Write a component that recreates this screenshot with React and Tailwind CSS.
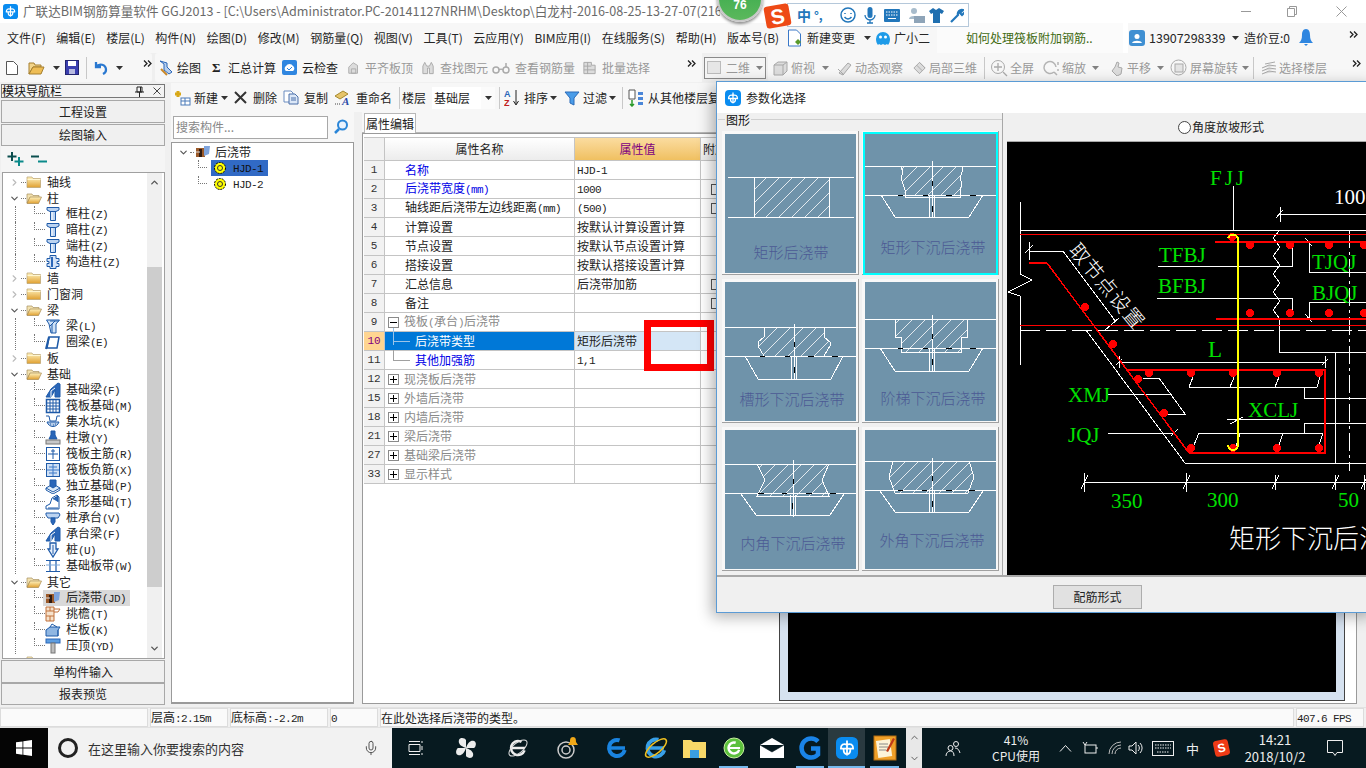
import React from "react";
import { Mic, ChevronUp, ChevronDown, ChevronRight } from "lucide-react";

const M = ({ children, className = "" }) => {
  const parts = String(children).split(/([\x00-\x7f]+)/).filter(Boolean);
  return (
    <span className={"whitespace-pre " + className}>
      {parts.map((p, i) =>
        /^[\x00-\x7f]+$/.test(p) ? (
          <span key={i} className="font-['Liberation_Mono'] text-[11px] tracking-[-0.6px]">{p}</span>
        ) : (
          <span key={i}>{p}</span>
        )
      )}
    </span>
  );
};

const Caret = ({ className = "" }) => (
  <svg width="7" height="4" viewBox="0 0 7 4" className={"shrink-0 " + className}><path d="M0 0h7L3.5 4z" fill="#333" /></svg>
);
const More = ({ className = "" }) => (
  <svg width="9" height="7" viewBox="0 0 9 7" className={"shrink-0 " + className}><path d="M1 .5l3 3-3 3M5 .5l3 3-3 3" fill="none" stroke="#222" strokeWidth="1.3" /></svg>
);
const Glodon = ({ s = 16, r = 3 }) => (
  <svg width={s} height={s} viewBox="0 0 16 16">
    <rect width="16" height="16" rx={r} fill="#0a8cf0" />
    <path d="M8 2.5v11M3 8.5h10M8 5.5c-2.5-1-4.5 0-4.5 3M8 5.5c2.5-1 4.5 0 4.5 3M5.5 8.5c0 2.5 1 4 2.5 4s2.5-1.500 2.500-4" fill="none" stroke="#fff" strokeWidth="1.300" />
  </svg>
);

/* ---------- tree icons ---------- */
const Folder = ({ open }) => (
  <svg width="16" height="14" viewBox="0 0 16 14" className="shrink-0">
    <defs>
      <linearGradient id="fg" x1="0" y1="0" x2="0" y2="1"><stop offset="0" stopColor="#fff3c0" /><stop offset="1" stopColor="#e0a030" /></linearGradient>
    </defs>
    {open ? (
      <>
        <path d="M1 3h5l1 1.500h6v2H4L1 12z" fill="#f3e2b0" stroke="#a89060" strokeWidth=".7" />
        <path d="M4 6h11.500l-3 6.500H1z" fill="url(#fg)" stroke="#a88a50" strokeWidth=".7" />
      </>
    ) : (
      <>
        <path d="M1 3.500V2h5l1 1.500h7.500v9H1z" fill="url(#fg)" stroke="#b8a070" strokeWidth=".7" />
        <path d="M1.500 4.500h13" stroke="#fff6d0" strokeWidth="1" />
      </>
    )}
  </svg>
);
const Ic = ({ children }) => (
  <svg width="16" height="16" viewBox="0 0 16 16" fill="none" stroke="#1e5aa8" strokeWidth="1" className="shrink-0">{children}</svg>
);
const treeIcon = {
  col: <Ic><path d="M2 1.500h12v2.500l-3 1.500H5L2 4zM5.500 5.500h5v9h-5z" fill="#bcd4f2" /><path d="M7 6v8" stroke="#fff" /></Ic>,
  gz: <Ic><path d="M5 1.500h6v3h3v3h-2v2h2v3h-3v2H5v-2H2v-3h2v-2H2v-3h3z" fill="#d6e4f7" /><path d="M7 3v10" stroke="#2a66b8" strokeWidth="2" /></Ic>,
  beam: <Ic><path d="M1.500 2h13L11 6v9H6L4 6z" fill="#cfe2f7" /><path d="M5 3l9 0M7 6v9M10 3L5 8" /></Ic>,
  ring: <Ic><path d="M4 3h10l-2 11H2z" fill="#fff" strokeWidth="1.500" /><path d="M1 15l3-12" strokeWidth="2" /></Ic>,
  fbeam: <Ic><path d="M1 15l5-8 7-6 2 1v13H10V8L6 15z" fill="#2a66b8" /><path d="M6 15V9l4-3" stroke="#fff" /></Ic>,
  grid: <Ic><rect x="1.500" y="1.500" width="13" height="13" fill="#fff" strokeWidth="1.500" /><path d="M5 1.500v13M8 1.500v13M11 1.500v13M1.500 5h13M1.500 8h13M1.500 11h13" /></Ic>,
  pit: <Ic><path d="M1 2h3l1 5h6l1-5h3" /><path d="M2 8c2 6 10 6 12 0z" fill="#b7cde8" /><path d="M5 10h1M8 11h1M10 10h1" /></Ic>,
  pier: <Ic><path d="M6 1h4v4l2 4H4l2-4z" fill="#2a66b8" /><rect x="1" y="10" width="14" height="4" fill="#c8c8c8" stroke="#777" /></Ic>,
  rbar: <Ic><rect x="1.500" y="1.500" width="13" height="13" fill="#fff" /><path d="M8 3v10M3 8h10M6 5h4" /></Ic>,
  nbar: <Ic><rect x="1.500" y="1.500" width="13" height="13" fill="#cfe0f5" /><path d="M8 2v12M2 8h12M4 5h8M4 11h8" stroke="#3a78c8" /></Ic>,
  ftg: <Ic><path d="M1 10l7-4 7 4-7 4z" fill="#dbe9f8" /><path d="M1 10v2l7 4 7-4v-2" /><path d="M5 2h6v6l-3 2-3-2z" fill="#2a66b8" /></Ic>,
  strip: <Ic><path d="M1 15v-3l4-2 2-6 5-3 2 2v12H1z" fill="#fff" /><path d="M8 5l5-3v6" fill="#2a66b8" /><path d="M3 14h10" /></Ic>,
  cap: <Ic><path d="M1 3h13l1 2-2 3H3L1 5z" fill="#bcd4f2" /><path d="M6 8h4v4l-2 3-2-3z" fill="#2a66b8" /></Ic>,
  pile: <Ic><path d="M5 1h6v6h2l-5 8-5-8h2z" fill="#e8f0fb" strokeWidth="1.300" /><path d="M8 3v9" /></Ic>,
  band: <Ic><path d="M1 2.500h14M1 13.500h14M5 2.500v11M11 2.500v11" strokeWidth="1.200" /><path d="M1 7h14" stroke="#7aa8dc" /></Ic>,
  jd: <Ic><path d="M1 4h9v9H1z" fill="#9b5a2a" stroke="none" /><path d="M4 5h3v8H4z" fill="#301a10" stroke="none" /><path d="M9 2l6 0-1 8-5 2z" fill="#7fa4dc" stroke="none" /><path d="M1 8h4" stroke="#ddd" /></Ic>,
  eave: <Ic><path d="M1 1h8v14H1z" fill="#f6e2cc" stroke="#c0703a" /><path d="M1 5h8M1 10h8M5 1v4M5 10v5M9 3h6l-2 3H9" stroke="#c0703a" /></Ic>,
  rail: <Ic><path d="M1 8l4-3h10l-2 3v6H1z" fill="#8fb6e2" /><path d="M5 5l2-3 5 3" /><path d="M13 8v6" /></Ic>,
  cope: <Ic><rect x="1" y="1" width="14" height="4" fill="#5d9de0" stroke="#2a66b8" /><rect x="6" y="5" width="4" height="10" fill="#bdbdbd" stroke="#777" /></Ic>,
};
const Gear = () => (
  <svg width="14" height="14" viewBox="0 0 14 14"><circle cx="7" cy="7" r="5.500" fill="#ffff00" stroke="#000" strokeWidth="1" strokeDasharray="2 1" /><circle cx="7" cy="7" r="2.500" fill="#ffff00" stroke="#333" /></svg>
);

const Tree0 = ({ open, text }) => (
  <div className="flex items-center h-4 shrink-0">
    <span className="w-[6px]" />
    {open ? <ChevronDown size={11} strokeWidth={2.5} color="#555" /> : <ChevronRight size={11} strokeWidth={2.5} color="#bbb" />}
    <span className="w-[5px] border-b border-dotted border-[#777] ml-[1px]" />
    <Folder open={open} />
    {text ? <span className="ml-[5px]">{text}</span> : null}
  </div>
);
const Tree1 = ({ icon, text, sel }) => (
  <div className="flex items-start h-4 shrink-0">
    <span className="w-[12px]" />
    <span className="w-[19px] h-4 border-l border-dotted border-[#777]" />
    <span className="w-[11px] h-[8px] border-l border-b border-dotted border-[#777]" />
    <span className={"flex items-center h-4 pl-[2px] -ml-[2px] w-[87px] " + (sel ? "bg-[#d9d9d9]" : "")}>
      {treeIcon[icon]}
      <M className="ml-[5px]">{text}</M>
    </span>
  </div>
);

/* ---------- thumbnail ---------- */
const Thumb = ({ id, label, lx, ly, hatch, lines, center, dbl, dashes }) => {
  const hs = [];
  for (let k = -120; k < 200; k += 13) hs.push(`M${k} 140L${k + 140} 0`);
  return (
    <svg width="131" height="139" viewBox="0 0 131 139" className="block bg-[#6f93aa]" shapeRendering="crispEdges">
      <defs><clipPath id={id}><polygon points={hatch} /></clipPath></defs>
      <path d={hs.join("")} stroke="#fff" strokeWidth=".8" clipPath={`url(#${id})`} fill="none" />
      <path d={lines} stroke="#fff" fill="none" />
      {center && <path d={`M${center[0]} ${center[1]}V${center[2]}`} stroke="#fff" />}
      {dbl && <path d={`M${dbl[0] - 2.500} ${dbl[1]}V${dbl[2]}M${dbl[0] + 2} ${dbl[1]}V${dbl[2]}`} stroke="#fff" />}
      {dashes && <path d={dashes} stroke="#000" strokeWidth="1" />}
      <text x={lx} y={ly} textAnchor="middle" fontSize="15" fill="#4c5a94" fontFamily="Noto Sans CJK SC, sans-serif" fontWeight="300">{label}</text>
    </svg>
  );
};
const cards = [
  { id: "t1", label: "矩形后浇带", lx: 66, ly: 124, hatch: "29,43 104,43 104,83 29,83", lines: "M3 43H129M3 83H129M29 43V83M104 43V83" },
  { id: "t2", sel: true, label: "矩形下沉后浇带", lx: 68, ly: 119, hatch: "36,32 98,32 96,40 98,47 95,62 40,62 38,47 36,40",
    lines: "M0 32H131M0 61H131M36 32L38 38 36 44 38 50 40 56 40 63H95V56L97 50 95 44 97 38 98 32M16 61L30 83H104L118 61", center: [67, 27, 84], dbl: [67, 62, 83],
    dashes: "M33 61h5M58 61h5M81 61h6M105 61h6M67 47v5M67 72v6" },
  { id: "t3", label: "槽形下沉后浇带", lx: 67, ly: 123, hatch: "39,45 99,45 99,55 105,60 105,64 99,74 39,74 33,64 33,60 39,55",
    lines: "M0 45H131M0 74H131M39 45V55L33 60V64L39 74M99 45V55L105 60V64L99 74M20 74L33 97H106L118 74", center: [69, 42, 98], dbl: [69, 75, 97],
    dashes: "M35 74h5M60 74h5M83 74h6M107 74h6M69 60v5M69 85v6" },
  { id: "t4", label: "阶梯下沉后浇带", lx: 68, ly: 122, hatch: "30,37 102,37 102,55 96,55 96,70 36,70 36,55 30,55",
    lines: "M0 37H131M0 66H131M30 37V55H36V70H96V55H102V37M15 66L30 89H104L118 66", center: [67, 33, 90], dbl: [67, 67, 89],
    dashes: "M33 66h5M58 66h5M81 66h6M105 66h6M67 52v5M67 77v6" },
  { id: "t5", label: "内角下沉后浇带", lx: 68, ly: 119, hatch: "32,34 104,34 97,50 104,66 32,66 40,50",
    lines: "M0 34H131M0 63H131M32 34L40 50 32 66H104L97 50 104 34M16 64L31 85H105L119 64", center: [68, 30, 87], dbl: [68, 65, 85],
    dashes: "M33 63h6M57 63h5M81 63h6M105 63h6M68 49v5M67 73v6" },
  { id: "t6", label: "外角下沉后浇带", lx: 67, ly: 116, hatch: "28,31 104,31 109,47 103,63 30,63 24,47",
    lines: "M0 31H131M0 60H131M28 31L24 47 30 63H103L109 47 104 31M15 61L30 82H104L118 61", center: [67, 28, 83], dbl: [67, 61, 82],
    dashes: "M33 60h5M57 60h5M81 60h6M104 60h6M67 46v5M67 71v6" },
];

/* ---------- CAD drawing ---------- */
const Cad = () => {
  const G = (x, y, t, s = 21, ls = 0) => <text x={x} y={y} fill="#00e000" fontSize={s} letterSpacing={ls} fontFamily="Liberation Serif, serif">{t}</text>;
  const dots = [[1232,237],[1250,245],[1290,245],[1329,245],[1364,245],[1250,313],[1290,313],[1329,313],[1364,313],[1085,307],[1113,344],
    [1149,373],[1191,373],[1233,373],[1277,373],[1319,373],[1138,379],[1164,413],[1191,448],[1233,448],[1277,448],[1319,448]];
  const zig = "M1280 230L1273 238 1280 247 1273 256 1280 265 1273 274 1280 283 1273 292 1280 301 1273 310 1280 319 1279 330";
  const white = [
    "M1020 202V274L1032 280 1008 292 1020 296V365","M1020 230.500H1366","M1233.500 186V230",
    "M1158 266H1292V248","M1157 298H1292V313","M1305 238L1312 246M1309 243V272H1366","M1309 302H1366M1309 302V318M1305 314L1312 322",
    "M1280 214H1366M1280 207V222M1276 218L1283 210","M1279 330V352H1366","M1335 352V463",
    "M1029 242V260M1029 251H1063L1116 322M1025 253L1033 245","M1104 331L1119 318","M1086 330L1185 463H1366",
    "M1143 378H1159L1185 414H1168","M1189 387H1317M1189 387L1193 377M1230 387L1235 375M1275 387L1279 377M1317 387L1320 377",
    "M1304 387V398H1366","M1108 394H1171","M1108 433H1174M1171 436L1178 429","M1227 419H1300M1230 424L1243 417",
    "M1199 433H1323M1199 433L1194 445M1240 433L1236 447M1283 433L1279 445M1323 433L1319 445","M1304 433V423H1366",
    "M1119 362H1325M1119 356V368M1116 365L1122 359M1325 356V368M1322 365L1328 359",
    "M1084 482H1366M1084 473V492M1186 473V492M1275 475V490M1335 475V490M1364 475V490M1081 489L1088 475M1183 489L1190 475M1272 489L1279 475M1332 489L1339 475M1361 489L1368 475",
  ];
  return (
    <svg width="359" height="433" viewBox="1007 142 359 433" className="block bg-black shrink-0" shapeRendering="crispEdges" fontFamily="Liberation Serif, serif">
      <path d={white.join("")} stroke="#fff" fill="none" />
      <path d={zig} stroke="#fff" fill="none" />
      <path d="M1020 330H1366" stroke="#fff" strokeDasharray="20 6" />
      <path d="M1349 230V471" stroke="#fff" strokeDasharray="18 4 3 4" />
      <path d="M1020 234.500H1366M1020 325H1366" stroke="#f00" />
      <path d="M1215 242H1366M1216 319H1366M1029 263H1047M1128 370H1325V453H1189" stroke="#f00" strokeWidth="2" fill="none" />
      <path d="M1047 263L1189 453" stroke="#f00" strokeWidth="1.500" />
      {dots.map(([x, y], i) => <circle key={i} cx={x} cy={y} r="4" fill="#f00" />)}
      <path d="M1228 238A5.500 5.500 0 0 1 1238 238V445A5 5 0 0 1 1228 445" stroke="#ff0" strokeWidth="2" fill="none" />
      {G(1210, 185, "FJJ", 21, 3)}{G(1159, 262, "TFBJ")}{G(1158, 293, "BFBJ")}{G(1312, 269, "TJQJ")}{G(1312, 300, "BJQJ")}
      {G(1208, 357, "L", 23)}{G(1068, 402, "XMJ")}{G(1068, 442, "JQJ")}{G(1248, 417, "XCLJ")}
      {G(1111, 508, "350")}{G(1207, 507, "300")}{G(1338, 507, "50")}
      <text x="1334" y="204" fill="#fff" fontSize="21">100</text>
      <text x="1229" y="548" fill="#fff" fontSize="26" fontFamily="Noto Sans CJK SC, sans-serif" fontWeight="300">矩形下沉后浇带</text>
      <text transform="translate(1106 287) rotate(50)" textAnchor="middle" fill="#fff" fontSize="20" fontFamily="Noto Sans CJK SC, sans-serif" fontWeight="300" letterSpacing="1" y="6">取节点设置</text>
    </svg>
  );
};

/* ---------- property table ---------- */
const rows = [
  ["1", "名称", "HJD-1", "b"], ["2", "后浇带宽度(mm)", "1000", "b", 1], ["3", "轴线距后浇带左边线距离(mm)", "(500)", "d", 1],
  ["4", "计算设置", "按默认计算设置计算", "d"], ["5", "节点设置", "按默认节点设置计算", "d"], ["6", "搭接设置", "按默认搭接设置计算", "d"],
  ["7", "汇总信息", "后浇带加筋", "d", 1], ["8", "备注", "", "d", 1], ["9", "筏板(承台)后浇带", "", "g", 0, "-"],
  ["10", "后浇带类型", "矩形后浇带", "sel"], ["11", "其他加强筋", "1,1", "sub"], ["12", "现浇板后浇带", "", "g", 0, "+"],
  ["15", "外墙后浇带", "", "g", 0, "+"], ["18", "内墙后浇带", "", "g", 0, "+"], ["21", "梁后浇带", "", "g", 0, "+"],
  ["27", "基础梁后浇带", "", "g", 0, "+"], ["33", "显示样式", "", "g", 0, "+"],
];
const Box = ({ t }) => (
  <span className="w-[11px] h-[11px] border border-[#8a8a8a] bg-white flex items-center justify-center shrink-0 relative">
    <span className="w-[7px] h-px bg-black" />
    {t === "+" && <span className="absolute w-px h-[7px] bg-black" />}
  </span>
);
const Row = ({ r }) => {
  const [n, name, val, kind, chk, tog] = r;
  const sel = kind === "sel";
  const sub = sel || kind === "sub";
  const color = kind === "b" || kind === "sub" ? "text-[#0000e6]" : kind === "g" ? "text-[#8a8a8a]" : sel ? "text-white" : "text-[#222]";
  return (
    <div className="flex h-[19px] border-b border-[#c4c4c4] bg-white">
      <div className={"w-[21px] flex items-center justify-center border-r border-[#c4c4c4] font-['Liberation_Mono'] text-[11px] " + (sel ? "bg-[#ffd591] text-[#800080]" : "bg-[#f2f2f2] text-[#333]")}>{n}</div>
      <div className={"w-[190px] flex items-center border-r border-[#c4c4c4] " + (sel ? "bg-[#0078d7]" : "")}>
        {tog ? (
          <span className="ml-[3px] flex items-center"><Box t={tog} /><M className={"ml-[5px] " + color}>{name}</M></span>
        ) : sub ? (
          <span className="flex items-center">
            <span className={"ml-[8px] w-[17px] self-start border-l mb-[10px] " + (sel ? "h-[18px] border-[#9cc4e8]" : "border-[#a0a0a0] h-[10px]")} />
            <span className={"w-[17px] h-px -ml-[17px] " + (sel ? "bg-[#9cc4e8]" : "bg-[#a0a0a0]")} />
            <M className={"ml-[5px] " + color}>{name}</M>
          </span>
        ) : (
          <M className={"ml-[20px] " + color}>{name}</M>
        )}
      </div>
      <div className={"w-[126px] flex items-center pl-[2px] border-r border-[#c4c4c4] " + (sel ? "bg-[#d4e6f6]" : "")}><M className="text-[#222]">{val}</M></div>
      <div className="w-[60px] flex items-center pl-[10px]">
        {chk ? <span className="w-[11px] h-[11px] border border-[#555] bg-white" /> : null}
      </div>
    </div>
  );
};

/* ---------- toolbars ---------- */
const GrayIc = ({ d, w = 16 }) => (
  <svg width={w} height="16" viewBox="0 0 16 16" fill="#dcdcdc" stroke="#a8a8a8" strokeWidth="1" className="shrink-0"><path d={d} /></svg>
);
const T = ({ cls = "", icon, text, gray, gap = "gap-[2px]" }) => (
  <span className={"flex items-center shrink-0 " + gap + " " + cls + " " + (gray ? "text-[#999]" : "text-[#222]")}>
    {icon}<span>{text}</span>
  </span>
);
const Sep = ({ cls = "" }) => <span className={"w-px h-[22px] bg-[#c8c8c8] shrink-0 " + cls} />;

const menu = ["文件(F)", "编辑(E)", "楼层(L)", "构件(N)", "绘图(D)", "修改(M)", "钢筋量(Q)", "视图(V)", "工具(T)", "云应用(Y)", "BIM应用(I)", "在线服务(S)", "帮助(H)", "版本号(B)"];

const Tray = ({ children, cls = "" }) => <span className={"shrink-0 flex items-center justify-center " + cls}>{children}</span>;
const Under = ({ children, w = "w-[29px]", on, cls = "" }) => (
  <span className={"relative h-10 flex items-center justify-center shrink-0 " + w + " " + cls}>
    {children}
    {on && <span className="absolute bottom-0 left-0 right-0 h-[2px] bg-[#76b9ed]" />}
  </span>
);

export default function App() {
  return (
    <div className="relative w-[1366px] h-[768px] overflow-hidden flex flex-col bg-[#f5f5f5] font-['Noto_Sans_CJK_SC',sans-serif] text-[12px] leading-none text-[#222] whitespace-nowrap">
      {/* title */}
      <div className="h-[23px] bg-white flex items-center shrink-0 relative">
        <span className="ml-[3px]"><Glodon s={15} /></span>
        <span className="ml-[5px] text-[12.6px] text-[#6a6a6a] whitespace-nowrap w-[697px] overflow-hidden">广联达BIM钢筋算量软件 GGJ2013 - [C:\Users\Administrator.PC-20141127NRHM\Desktop\白龙村-2016-08-25-13-27-07(216</span>
        <span className="ml-auto flex items-center">
          <span className="w-[10px] h-px bg-[#999] mr-[36px]" />
          <svg width="10" height="11" viewBox="0 0 10 11" className="mr-[39px]"><path d="M.5 2.500h7v8h-7zM2.500 2.500V.5h7v8h-2" fill="none" stroke="#999" /></svg>
          <svg width="11" height="11" viewBox="0 0 11 11" className="mr-[19px]"><path d="M.5.5l10 10M10.500.5l-10 10" stroke="#999" /></svg>
        </span>
      </div>

      {/* menu */}
      <div className="h-[30px] flex items-center shrink-0 bg-[#f7f7f7] pl-[7px] text-[#262626]">
        <div className="flex gap-[10.6px] w-[775px] shrink-0">{menu.map((m) => <span key={m}>{m}</span>)}</div>
        <svg width="15" height="18" viewBox="0 0 15 18" className="ml-[5px] shrink-0"><path d="M1.500 1h8l4 4v12h-12z" fill="#fff" stroke="#3a78c8" /><path d="M8 13l3-3 3 3-3 3z" fill="#5a9a2a" /></svg>
        <span className="ml-[5px] shrink-0">新建变更</span>
        <Caret className="ml-[9px]" />
        <svg width="16" height="16" viewBox="0 0 16 16" className="ml-[4px] shrink-0"><path d="M1 9a7 7 0 0 1 14 0c0 3-1 5-2 6l-1-1-2 1-2-1-2 1-2-1-1 1c-1-1-2-3-2-6z" fill="#1e9be8" /><circle cx="5.500" cy="7" r="1.500" fill="#fff" /><circle cx="10.500" cy="7" r="1.500" fill="#fff" /></svg>
        <span className="ml-[3px] shrink-0">广小二</span>
        <span className="w-[186px] ml-[7px] h-[30px] bg-[#fbfbfb] flex items-center pl-[29px] shrink-0"><span className="text-[#3f6a12]">如何处理筏板附加钢筋..</span></span>
        <span className="w-[5px] h-[30px] bg-white shrink-0" />
        <span className="w-4 h-4 rounded-[3px] bg-[#3f8fd2] ml-[1px] flex items-center justify-center shrink-0">
          <svg width="10" height="11" viewBox="0 0 10 11"><circle cx="5" cy="3.500" r="2.500" fill="#fff" /><path d="M0 10c1-3 9-3 10 0z" fill="#fff" /></svg>
        </span>
        <span className="ml-[4px] text-[12.5px] w-[76px] shrink-0">13907298339</span>
        <Caret className="ml-[7px]" />
        <span className="ml-[5px] w-[45px] shrink-0">造价豆:0</span>
        <svg width="14" height="18" viewBox="0 0 14 18" className="ml-[10px] shrink-0"><path d="M7 0c3 0 4 3 4 6 0 4 1 6 3 8H0c2-2 3-4 3-8 0-3 1-6 4-6z" fill="#2f86e0" /><path d="M5 15h4l-2 2z" fill="#2f86e0" /></svg>
        <More className="ml-[36px] -mt-[8px]" />
      </div>

      {/* toolbar 1 */}
      <div className="h-[29px] flex items-center shrink-0 bg-[#efefef]">
        <div className="flex items-center w-[152px] h-full bg-[#f7f7f7] rounded-r-[3px]">
          <svg width="12" height="14" viewBox="0 0 12 14" className="ml-[6px]"><path d="M.5.5h7l4 4v9H.5z" fill="#fff" stroke="#555" /></svg>
          <svg width="17" height="14" viewBox="0 0 17 14" className="ml-[10px]"><path d="M1 2h5l1 2h6v2H5l-4 7z" fill="#f2d48a" stroke="#a57f2e" /><path d="M5 6h11l-3 7H1z" fill="#eebd55" stroke="#a57f2e" /></svg>
          <Caret className="ml-[8px]" />
          <svg width="14" height="15" viewBox="0 0 14 15" className="ml-[5px]"><rect x=".5" y=".5" width="13" height="14" fill="#3b3fb0" stroke="#22246e" /><rect x="3" y="1" width="8" height="5" fill="#fff" /><rect x="4" y="9" width="6" height="5" fill="#b8bbe0" /></svg>
          <Sep cls="ml-[7px]" />
          <svg width="14" height="14" viewBox="0 0 14 14" className="ml-[7px]"><path d="M2 1v5h5M2 6c3-4 10-3 10 3 0 2-1 3-3 4" fill="none" stroke="#2a78d0" strokeWidth="2.300" /></svg>
          <Caret className="ml-[8px]" />
          <More className="ml-[20px] -mt-[8px]" />
        </div>
        <div className="flex items-center h-full bg-[#f7f7f7] ml-[3px] rounded-l-[3px] w-[547px] shrink-0">
          <T cls="ml-[2px]" icon={<svg width="18" height="18" viewBox="0 0 18 18"><path d="M3 2l4 3v6l5 4 3-2-5-5V4z" fill="#b7cfee" stroke="#2a66b8" /><path d="M4 10l6 6" stroke="#c9882a" strokeWidth="2" /></svg>} text="绘图" />
          <T cls="ml-[11px]" gap="gap-[8px]" icon={<b className="text-[13px] font-bold font-['Liberation_Serif'] w-[8px]">Σ</b>} text="汇总计算" />
          <T cls="ml-[6px]" gap="gap-[5px]" icon={<span className="w-[15px] h-[15px] bg-[#2f86e0] rounded-[2px] flex items-center justify-center"><svg width="13" height="11" viewBox="0 0 13 11"><path d="M3 9a3 3 0 0 1 0-5 4 4 0 0 1 7 0 3 3 0 0 1 0 5z" fill="#fff" /><path d="M4 6l2 2 3-3" stroke="#2f86e0" fill="none" /></svg></span>} text="云检查" />
          <T cls="ml-[9px]" gap="gap-[4px]" gray icon={<GrayIc w={14} d="M2 14V7l5-5 5 3v9zM5 9h5v5H5z" />} text="平齐板顶" />
          <T cls="ml-[8px]" gap="gap-[4px]" gray icon={<GrayIc w={15} d="M2 14V6l2-4 2 4h3l2-4 2 4v8h-4V8H7v6z" />} text="查找图元" />
          <T cls="ml-[3px]" gap="gap-[4px]" gray icon={<svg width="20" height="12" viewBox="0 0 20 12" fill="none" stroke="#aaa" strokeWidth="1.500"><circle cx="5" cy="8" r="3" /><circle cx="15" cy="8" r="3" /><path d="M8 8c1-1 3-1 4 0M15 5V1" /></svg>} text="查看钢筋量" />
          <T cls="ml-[7px]" gap="gap-[5px]" gray icon={<GrayIc w={15} d="M2 2h8v3h4v9H2zM2 6h8M2 10h12M6 2v12" />} text="批量选择" />
          <More className="ml-auto mr-[6px] -mt-[8px]" />
        </div>
        <span className="ml-[2px] w-[62px] h-[22px] border border-[#8a8a8a] bg-[#f5f5f5] flex items-center shrink-0 text-[#999]">
          <span className="w-[14px] h-[13px] ml-[2px] border border-[#bbb] bg-[#e6e6e6]" /><span className="ml-[5px]">二维</span><Caret className="ml-[6px] opacity-60" />
        </span>
        <div className="flex items-center h-full bg-[#f7f7f7] flex-1 ml-[2px] rounded-l-[3px]">
          <T cls="ml-[3px]" gap="gap-[2px]" gray icon={<GrayIc w={18} d="M2 5l4-3h9v9l-4 4H2zM2 5h9v10M11 5l4-3" />} text="俯视" />
          <Caret className="ml-[7px] opacity-60" />
          <T cls="ml-[8px]" gap="gap-[2px]" gray icon={<GrayIc d="M2 13l9-10 3 2-8 10zM1 9l6 6" />} text="动态观察" />
          <T cls="ml-[9px]" gap="gap-[2px]" gray icon={<GrayIc w={15} d="M2 8l6-6 6 6-6 6zM5 5l6 6M8 2l6 6" />} text="局部三维" />
          <Sep cls="ml-[7px]" />
          <T cls="ml-[5px]" gap="gap-[2px]" gray icon={<svg width="18" height="18" viewBox="0 0 18 18" fill="none" stroke="#aaa"><circle cx="8" cy="8" r="6.500" /><path d="M8 4v8M4 8h8M13 13l4 4" strokeWidth="1.300" /></svg>} text="全屏" />
          <T cls="ml-[8px]" gap="gap-[2px]" gray icon={<svg width="18" height="18" viewBox="0 0 18 18" fill="none" stroke="#b5b5b5" strokeWidth="1.500"><path d="M14 8a6 6 0 1 0-2 5M12 13l3 3M16 3v3M16 10v2" /></svg>} text="缩放" />
          <Caret className="ml-[6px] opacity-60" />
          <T cls="ml-[8px]" gap="gap-[2px]" gray icon={<GrayIc w={18} d="M4 11l3-4 2-5 2 1-1 4 4 1-1 6-4 2z" />} text="平移" />
          <Caret className="ml-[6px] opacity-60" />
          <T cls="ml-[5px]" gap="gap-[2px]" gray icon={<svg width="19" height="19" viewBox="0 0 19 19" fill="none" stroke="#aaa"><circle cx="9.500" cy="9.500" r="7.500" /><rect x="6" y="6" width="8" height="8" fill="#e4e4e4" /></svg>} text="屏幕旋转" />
          <Caret className="ml-[4px] opacity-60" />
          <Sep cls="ml-[4px]" />
          <T cls="ml-[7px]" gap="gap-[2px]" gray icon={<GrayIc d="M1 8l7-3 7 1M1 11l7-3 7 1M1 14l7-3 7 1M4 4l10-2" />} text="选择楼层" />
          <More className="ml-auto mr-[5px] -mt-[8px]" />
        </div>
      </div>

      {/* main */}
      <div className="flex-1 flex min-h-0 bg-[#f0f0f0]">
        {/* left nav */}
        <div className="w-[165px] shrink-0 flex flex-col pl-[1px] pt-[2px]">
          <div className="h-[14px] border border-[#777] bg-[#f3f3f3] flex items-center justify-between pr-[3px]">
            <span className="text-[#111]">模块导航栏</span>
            <span className="flex items-center gap-[9px]">
              <svg width="9" height="11" viewBox="0 0 9 11"><path d="M2 1h5v5H2zM0 6h9M4.500 6v5M5.500 1v5" fill="none" stroke="#222" /></svg>
              <svg width="8" height="8" viewBox="0 0 8 8"><path d="M.5.5l7 7M7.500.5l-7 7" stroke="#444" /></svg>
            </span>
          </div>
          <div className="h-[23px] mt-[2px] border border-[#a8a8a8] bg-[#f0f0f0] flex items-center justify-center">工程设置</div>
          <div className="h-[22px] mt-px border border-[#a8a8a8] bg-[#f0f0f0] flex items-center justify-center">绘图输入</div>
          <div className="h-[26px] flex items-center pl-[6px] gap-[6px] bg-[#f5f5f5] shrink-0">
            <svg width="17" height="16" viewBox="0 0 17 16"><path d="M5 1v9M.5 5.500h9" stroke="#0b4e4e" strokeWidth="2" /><path d="M12 6v9M7.500 10.500h9" stroke="#0b8a8a" strokeWidth="2" /></svg>
            <svg width="17" height="16" viewBox="0 0 17 16"><path d="M1 5.500h8" stroke="#0b4e4e" strokeWidth="2" /><path d="M8 10.500h9" stroke="#0b8a8a" strokeWidth="2" /></svg>
          </div>
          <div className="h-[487px] border border-[#a0a0a0] bg-white flex overflow-hidden ml-[1px] relative shrink-0 text-[#222]">
            <div className="w-[144px] shrink-0 pt-[1px] flex flex-col">
              <Tree0 text="轴线" />
              <Tree0 open text="柱" />
              <Tree1 icon="col" text="框柱(Z)" /><Tree1 icon="col" text="暗柱(Z)" /><Tree1 icon="col" text="端柱(Z)" /><Tree1 icon="gz" text="构造柱(Z)" />
              <Tree0 text="墙" /><Tree0 text="门窗洞" /><Tree0 open text="梁" />
              <Tree1 icon="beam" text="梁(L)" /><Tree1 icon="ring" text="圈梁(E)" />
              <Tree0 text="板" /><Tree0 open text="基础" />
              <Tree1 icon="fbeam" text="基础梁(F)" /><Tree1 icon="grid" text="筏板基础(M)" /><Tree1 icon="pit" text="集水坑(K)" /><Tree1 icon="pier" text="柱墩(Y)" />
              <Tree1 icon="rbar" text="筏板主筋(R)" /><Tree1 icon="nbar" text="筏板负筋(X)" /><Tree1 icon="ftg" text="独立基础(P)" /><Tree1 icon="strip" text="条形基础(T)" />
              <Tree1 icon="cap" text="桩承台(V)" /><Tree1 icon="fbeam" text="承台梁(F)" /><Tree1 icon="pile" text="桩(U)" /><Tree1 icon="band" text="基础板带(W)" />
              <Tree0 open text="其它" />
              <Tree1 sel icon="jd" text="后浇带(JD)" /><Tree1 icon="eave" text="挑檐(T)" /><Tree1 icon="rail" text="栏板(K)" /><Tree1 icon="cope" text="压顶(YD)" />
              <Tree0 />
            </div>
            <div className="w-[15px] ml-auto mr-[2px] bg-[#f0f0f0] flex flex-col items-center shrink-0">
              <span className="h-[15px] flex items-end"><ChevronUp size={11} strokeWidth={3} color="#555" /></span>
              <span className="mt-[79px] w-full h-[320px] bg-[#cdcdcd]" />
              <span className="mt-auto h-[15px]"><ChevronDown size={11} strokeWidth={3} color="#555" /></span>
            </div>
          </div>
          <div className="h-[23px] mt-[1px] border border-[#a8a8a8] bg-[#f0f0f0] flex items-center justify-center">单构件输入</div>
          <div className="h-[22px] border border-[#a8a8a8] bg-[#f0f0f0] flex items-center justify-center">报表预览</div>
        </div>

        {/* right */}
        <div className="flex-1 min-w-0 flex flex-col">
          <div className="h-[29px] mt-px flex items-center ml-[6px] bg-[#f7f7f7] shrink-0">
            <T cls="ml-[4px]" gap="gap-[3px]" icon={<svg width="16" height="16" viewBox="0 0 16 16"><path d="M3 1v6M0 4h6" stroke="#d8a818" strokeWidth="3" /><rect x="6" y="8" width="9" height="7" fill="#fff" stroke="#4a7ab8" /><path d="M6 11h9M10 8v7" stroke="#4a7ab8" /></svg>} text="新建" />
            <Caret className="ml-[3px]" />
            <T cls="ml-[6px]" gap="gap-[6px]" icon={<svg width="13" height="13" viewBox="0 0 13 13"><path d="M1 1l11 11M12 1L1 12" stroke="#333" strokeWidth="2" /></svg>} text="删除" />
            <T cls="ml-[6px]" gap="gap-[5px]" icon={<svg width="16" height="15" viewBox="0 0 16 15"><path d="M1 1h7l2 2v9H1z" fill="#fff" stroke="#6a8cc0" /><path d="M6 4h6l3 3v7H6z" fill="#dbe7f7" stroke="#4a6ea8" /><path d="M8 8h5M8 10h5" stroke="#4a6ea8" /></svg>} text="复制" />
            <T cls="ml-[6px]" gap="gap-[4px]" icon={<svg width="18" height="16" viewBox="0 0 18 16"><path d="M1 6l8-5 5 3-8 5z" fill="#e6c46a" stroke="#a58a2e" /><text x="8" y="15" fontSize="11" fontWeight="700" fill="#2a4aa8" fontFamily="Liberation Serif, serif" fontStyle="italic">A</text><path d="M1 14h6" stroke="#444" strokeDasharray="1 1" /></svg>} text="重命名" />
            <Sep cls="ml-[7px]" />
            <span className="ml-[2px]">楼层</span>
            <span className="ml-[6px] w-[49px] h-[22px] bg-white flex items-center pl-[2px]">基础层</span>
            <span className="w-[14px] h-[22px] bg-[#fbfbfb] flex items-center justify-center"><Caret /></span>
            <Sep cls="ml-[4px]" />
            <T cls="ml-[4px]" gap="gap-[3px]" icon={<svg width="17" height="18" viewBox="0 0 17 18"><text x="0" y="8" fontSize="9" fontWeight="700" fill="#2a66b8" fontFamily="Liberation Sans, sans-serif">A</text><text x="0" y="17" fontSize="9" fontWeight="700" fill="#c02020" fontFamily="Liberation Sans, sans-serif">Z</text><path d="M12 1v14M9.500 12l2.500 4 2.500-4" stroke="#222" fill="none" /></svg>} text="排序" />
            <Caret className="ml-[2px]" />
            <T cls="ml-[7px]" gap="gap-[3px]" icon={<svg width="16" height="16" viewBox="0 0 16 16"><path d="M1 2h14L10 8v7l-4-2V8z" fill="#4a9ce8" stroke="#2a6ab8" /></svg>} text="过滤" />
            <Caret className="ml-[2px]" />
            <Sep cls="ml-[6px]" />
            <T cls="ml-[5px]" gap="gap-[4px]" icon={<svg width="16" height="18" viewBox="0 0 16 18"><path d="M1 1h6v9H1z" fill="#fff" stroke="#555" /><path d="M4 11v6M2 15l2 2 2-2" stroke="#2a9a2a" strokeWidth="1.500" fill="none" /><path d="M10 3h5v3h-5zM10 8h5v3h-5zM10 13h5v3h-5z" fill="#4a86d8" /></svg>} text="从其他楼层复制" />
          </div>
          <div className="flex-1 min-h-0 flex">
            {/* tree pane */}
            <div className="w-[183px] ml-[6px] shrink-0 flex flex-col mb-[3px]">
              <div className="h-[30px] flex items-center shrink-0 bg-[#f7f7f7]">
                <span className="ml-[2px] w-[155px] h-[23px] border border-[#a8a8a8] bg-white flex items-center pl-[2px] text-[#888]">搜索构件...</span>
                <svg width="16" height="16" viewBox="0 0 16 16" className="ml-[5px]"><circle cx="9.500" cy="6" r="4.500" fill="#e8f3ff" stroke="#2a86d8" strokeWidth="2" /><path d="M6 10l-4 4" stroke="#2a86d8" strokeWidth="2.500" /></svg>
              </div>
              <div className="flex-1 border border-[#9a9a9a] border-b-2 bg-white pt-[1px] text-[#222]">
                <div className="flex items-center h-4 ml-[6px]">
                  <ChevronDown size={11} strokeWidth={2.5} color="#555" />
                  <span className="w-[4px] border-b border-dotted border-[#777] ml-[1px] mr-[1px]" />
                  {treeIcon.jd}
                  <span className="ml-[4px]">后浇带</span>
                </div>
                <div className="flex items-start h-4">
                  <span className="w-[26px]" />
                  <span className="w-[9px] h-[8px] border-l border-b border-dotted border-[#777] mr-[5px]" />
                  <span className="w-[57px] h-4 bg-[#316ac5] flex items-center pl-[2px] -ml-[1px]"><Gear /><M className="ml-[6px] text-[#111]">HJD-1</M></span>
                </div>
                <div className="flex items-start h-4">
                  <span className="w-[26px]" />
                  <span className="w-[9px] h-[8px] border-l border-b border-dotted border-[#777] mr-[5px]" />
                  <span className="h-4 flex items-center pl-[2px] -ml-[1px]"><Gear /><M className="ml-[6px]">HJD-2</M></span>
                </div>
              </div>
            </div>
            {/* property pane */}
            <div className="flex-1 min-w-0 ml-[8px] mr-[9px] flex flex-col mb-[3px]">
              <div className="h-[21px] shrink-0 flex items-end bg-[#f7f7f7] border-b border-[#b8b8b8]">
                <span className="ml-[2px] w-[52px] h-[20px] bg-white border border-b-0 border-[#b8b8b8] flex items-center justify-center -mb-px">属性编辑</span>
              </div>
              <div className="flex-1 bg-white border border-[#9a9a9a] flex min-h-0 pt-[3px] relative">
                <div className="w-[415px] shrink-0 ml-[1px]">
                  <div className="flex h-[24px] border-y border-[#c4c4c4]">
                    <div className="w-[21px] bg-[#f2f2f2] border-r border-[#c4c4c4]" />
                    <div className="w-[190px] bg-gradient-to-b from-white to-[#ececec] border-r border-[#c4c4c4] flex items-center justify-center"><span>属性名称</span></div>
                    <div className="w-[126px] bg-gradient-to-b from-[#fbdc9f] to-[#f0c060] border-r border-[#c4c4c4] flex items-center justify-center text-[#800080]"><span>属性值</span></div>
                    <div className="w-[78px] bg-gradient-to-b from-white to-[#ececec] flex items-center pl-[2px]">附加</div>
                  </div>
                  {rows.map((r) => <Row key={r[0]} r={r} />)}
                </div>
                <div className="ml-auto mr-[13px] mt-auto mb-[2px] w-[566px] h-[200px] border border-[#444] bg-[#d6e2f0] px-[8px] pb-[8px] shrink-0">
                  <div className="w-full h-full bg-black" />
                </div>
              </div>
            </div>
          </div>
        </div>
      </div>

      {/* status */}
      <div className="h-[21px] shrink-0 flex gap-[2px] bg-[#f0f0f0] text-[#222] border-y border-[#e2e2e2]">
        <span className="w-[148px] bg-[#fafafa] border border-[#dcdcdc]" />
        <span className="w-[78px] bg-[#fafafa] border border-[#dcdcdc] flex items-center"><M>层高:2.15m</M></span>
        <span className="w-[98px] bg-[#fafafa] border border-[#dcdcdc] flex items-center"><M>底标高:-2.2m</M></span>
        <span className="w-[48px] bg-[#fafafa] border border-[#dcdcdc] flex items-center"><M>0</M></span>
        <span className="w-[914px] bg-[#fafafa] border border-[#dcdcdc] flex items-center"><M>在此处选择后浇带的类型。</M></span>
        <span className="w-[68px] bg-[#fafafa] border border-[#dcdcdc] flex items-center"><M>407.6 FPS</M></span>
      </div>

      {/* taskbar */}
      <div className="h-10 shrink-0 flex items-center bg-[#071a20] text-white">
        <span className="w-12 h-10 bg-[#050505] flex items-center justify-center">
          <svg width="16" height="16" viewBox="0 0 16 16"><path d="M0 2.300l6.500-.9V7.600H0zM7.300 1.300L16 0v7.600H7.300zM0 8.400h6.500v6.300L0 13.800zM7.300 8.400H16V16l-8.700-1.200z" fill="#fff" /></svg>
        </span>
        <span className="w-[344px] h-10 bg-[#f2f2f2] flex items-center text-[#333] text-[13px]">
          <span className="ml-[10px] w-[20px] h-[20px] rounded-full border-[3px] border-[#222]" />
          <span className="ml-[10px]">在这里输入你要搜索的内容</span>
          <Mic size={16} color="#555" strokeWidth={1.500} className="ml-auto mr-[13px]" />
        </span>
        <Under w="w-[48px]"><svg width="16" height="16" viewBox="0 0 16 16" fill="none" stroke="#eee"><path d="M1 4.500h11v7H1zM14 1v2M14 6v4M14 13v2M1 1.500h11M1 14.500h11" /></svg></Under>
        <Under w="w-[52px]"><svg width="22" height="22" viewBox="0 0 22 22" fill="#ececec"><path d="M11 11C5 9 3 6 4 3s6-2 7 0zM11 11c2-6 5-8 8-7s2 6 0 7zM11 11c6 2 8 5 7 8s-6 2-7 0zM11 11c-2 6-5 8-8 7s-2-6 0-7z" /></svg></Under>
        <Under w="w-[52px]"><svg width="22" height="24" viewBox="0 0 22 24"><circle cx="11" cy="12" r="7" fill="none" stroke="#eee" strokeWidth="2.500" strokeDasharray="34 10" transform="rotate(20 11 12)" /><path d="M4 12h14" stroke="#eee" strokeWidth="2.500" /><ellipse cx="11" cy="12" rx="11" ry="5" fill="none" stroke="#ddd" transform="rotate(-40 11 12)" /></svg></Under>
        <Under w="w-[48px]"><svg width="26" height="26" viewBox="0 0 26 26"><circle cx="11" cy="15" r="8" fill="none" stroke="#ccc" strokeWidth="1.500" /><circle cx="11" cy="15" r="4" fill="none" stroke="#ccc" strokeWidth="1.500" /><path d="M18 2c3 0 3 3 3 5l2 3h-10l2-3c0-2 0-5 3-5z" fill="#f0a818" /></svg></Under>
        <Under w="w-[50px]"><svg width="24" height="24" viewBox="0 0 24 24"><circle cx="12" cy="12" r="8" fill="none" stroke="#1a84e0" strokeWidth="4" strokeDasharray="38 12" transform="rotate(15 12 12)" /><path d="M4 12h16" stroke="#1a84e0" strokeWidth="3.500" /></svg></Under>
        <Under w="w-[28px]"><svg width="26" height="26" viewBox="0 0 26 26"><circle cx="13" cy="13" r="8.500" fill="none" stroke="#38a0e8" strokeWidth="4" strokeDasharray="40 13" transform="rotate(15 13 13)" /><path d="M5 13h16" stroke="#38a0e8" strokeWidth="3.500" /><ellipse cx="13" cy="13" rx="13" ry="5" fill="none" stroke="#f0c020" strokeWidth="1.500" transform="rotate(-40 13 13)" /></svg></Under>
        <Under w="w-[49px]"><svg width="23" height="20" viewBox="0 0 23 20"><path d="M0 2h8l2 2h13v16H0z" fill="#f8d868" /><path d="M7 12h9v8H7z" fill="#3a9ee0" /></svg></Under>
        <Under w="w-[29px]" on><svg width="24" height="28" viewBox="0 0 24 28"><circle cx="12" cy="14" r="10" fill="#5cc03c" stroke="#c8f0a0" /><circle cx="12" cy="14" r="5.500" fill="none" stroke="#fff" strokeWidth="2.500" strokeDasharray="25 9" transform="rotate(20 12 14)" /><path d="M6 14h12" stroke="#fff" strokeWidth="2" /></svg></Under>
        <Under w="w-[48px]"><svg width="24" height="20" viewBox="0 0 24 20"><path d="M0 7L12 0l12 7v13H0z" fill="#fff" /><path d="M0 7l12 7 12-7" fill="#071a20" stroke="#071a20" strokeWidth=".6" /><path d="M0 9l9 5-9 5zM24 9l-9 5 9 5z" fill="#fff" /></svg></Under>
        <Under w="w-[28px]" on><svg width="24" height="26" viewBox="0 0 24 26"><path d="M20 6.500A9.500 9.500 0 1 0 20 19.500V13.500H13" fill="none" stroke="#1a84e8" strokeWidth="4.500" /></svg></Under>
        <Under w="w-[37px]" cls="bg-[#2a3a40] ml-[4px]" on><Glodon s={22} r={4} /></Under>
        <Under w="w-[29px]" cls="ml-[5px]" on><svg width="24" height="26" viewBox="0 0 24 26"><rect x="1" y="1" width="22" height="24" fill="#f0a028" stroke="#b06a10" /><rect x="4" y="5" width="14" height="17" fill="#fdf3d8" transform="rotate(-8 11 13)" /><path d="M6 9h9M6 12h9M6 15h7" stroke="#888" /><path d="M13 16l7-13 2 1-7 13z" fill="#c03a18" /></svg></Under>
        <span className="ml-[7px] w-[16px] h-10 bg-[#e8e8e8] flex flex-col items-center justify-between py-[4px] shrink-0">
          <ChevronUp size={11} strokeWidth={2} color="#555" /><ChevronDown size={11} strokeWidth={2} color="#555" />
        </span>
        <Tray cls="ml-[23px]"><svg width="16" height="17" viewBox="0 0 16 17" fill="none" stroke="#eee"><circle cx="5.500" cy="8" r="2.500" /><circle cx="11" cy="4" r="2.500" /><path d="M1 16c0-3 2-5 4.500-5S9 13 9 16M10 8c3 0 4 2 5 5" /></svg></Tray>
        <span className="ml-[20px] w-[70px] text-center shrink-0 flex flex-col gap-[4px] text-[#eee] font-['Noto_Sans_CJK_SC']"><span>41%</span><span>CPU使用</span></span>
        <Tray cls="ml-[8px]"><svg width="13" height="8" viewBox="0 0 13 8" fill="none" stroke="#eee"><path d="M1 7.500L6.500 1.500l5.500 6" /></svg></Tray>
        <Tray cls="ml-[10px]"><svg width="16" height="14" viewBox="0 0 16 14" fill="none" stroke="#eee"><rect x="3" y="4" width="11" height="8" /><path d="M14 7h2M1 1l2 3M5 1L3 4" /></svg></Tray>
        <Tray cls="ml-[10px]"><svg width="15" height="14" viewBox="0 0 15 14" fill="none" stroke="#bbb"><path d="M1 13A12 12 0 0 1 13 1M4 13a9 9 0 0 1 9-9M7 13a6 6 0 0 1 6-6" /></svg></Tray>
        <Tray cls="ml-[5px]"><svg width="15" height="14" viewBox="0 0 15 14" fill="none" stroke="#eee"><path d="M1 5v4h3l4 4V1L4 5zM10 4a4 4 0 0 1 0 6M12 2a7 7 0 0 1 0 10" /></svg></Tray>
        <Tray cls="ml-[9px]"><svg width="22" height="15" viewBox="0 0 22 15" fill="none" stroke="#eee"><rect x=".5" y=".5" width="21" height="14" /><path d="M3 4h16M3 7h16M5 11h12" strokeDasharray="1.500 1" /></svg></Tray>
        <span className="ml-[12px] text-[13px] shrink-0 text-[#eee]">中</span>
        <Tray cls="ml-[15px]"><span className="w-[15px] h-[16px] bg-[#ee3a16] rounded-[3px] flex items-center justify-center text-[12px] font-bold -rotate-12 font-['Liberation_Sans'] text-white">S</span></Tray>
        <span className="ml-[8px] w-[76px] shrink-0 text-center flex flex-col gap-[4px] text-[#eee] text-[13px]"><span>14:21</span><span>2018/10/2</span></span>
        <Tray cls="ml-[14px]"><svg width="16" height="17" viewBox="0 0 16 17" fill="none" stroke="#eee"><path d="M.5.5h15v12H10l-2 3-2-3H.5z" /></svg></Tray>
      </div>

      {/* overlays */}
      {/* floating ball */}
      <div className="absolute left-[717px] top-[-24px] w-[46px] h-[46px] rounded-full bg-gradient-to-b from-[#2fa84a] to-[#5bb85c] border-[2px] border-[#c8c8c8] shadow-[0_2px_3px_rgba(0,0,0,.45)] flex items-end justify-center pb-[9px] font-['Liberation_Sans'] text-[12px] font-bold text-white">76</div>
      {/* sogou */}
      <div className="absolute left-[787px] top-[3px] w-[182px] h-[24px] border border-[#b5c8da] bg-white flex items-center text-[#2277bb]">
        <span className="ml-[9px] text-[14px] font-bold">中</span>
        <span className="ml-[3px] text-[12px] font-bold w-[12px]">°,</span>
        <svg width="16" height="16" viewBox="0 0 16 16" className="ml-[14px]" fill="none" stroke="#2277bb" strokeWidth="1.500"><circle cx="8" cy="8" r="7" /><path d="M5 6v1M11 6v1M4.500 10c2 2.500 5 2.500 7 0" /></svg>
        <svg width="12" height="17" viewBox="0 0 12 17" className="ml-[8px]" fill="#2277bb"><rect x="3.500" y="0" width="5" height="11" rx="2.500" /><path d="M1 8a5 5 0 0 0 10 0M6 13v3M3 16h6" fill="none" stroke="#2277bb" strokeWidth="1.300" /></svg>
        <svg width="16" height="13" viewBox="0 0 16 13" className="ml-[8px]"><rect width="16" height="13" rx="1" fill="#2277bb" /><path d="M2 3h12M2 6h12" stroke="#fff" strokeDasharray="1.500 1" /><path d="M4 9.500h8" stroke="#fff" /></svg>
        <svg width="17" height="16" viewBox="0 0 17 16" className="ml-[8px]"><circle cx="6" cy="4" r="3" fill="#a8bccc" /><path d="M1 12c0-4 9-4 10 0z" fill="#a8bccc" /><rect x="6" y="9" width="11" height="7" fill="#8ea4b8" /></svg>
        <svg width="15" height="15" viewBox="0 0 15 15" className="ml-[4px]" fill="#1f6fb0"><path d="M4 0l3 2 3-2 5 3-2 3-2-1v10H4V5L2 6 0 3z" /></svg>
        <svg width="14" height="15" viewBox="0 0 14 15" className="ml-[6px]"><path d="M1 14l7-7a4 4 0 0 1 5-5l-3 3 2 2 3-3" fill="none" stroke="#2277bb" strokeWidth="2.200" /></svg>
      </div>
      <div className="absolute left-[765px] top-[5px] w-[25px] h-[22px] bg-[#ee4a16] rounded-[3px] -rotate-[10deg] flex items-center justify-center text-white font-bold text-[21px] font-['Liberation_Sans']">S</div>

      {/* red annotation */}
      <div className="absolute left-[644px] top-[320px] w-[70px] h-[51px] border-[7px] border-[#ff0000]" />

      {/* dialog */}
      <div className="absolute left-[716px] top-[81px] w-[660px] h-[532px] border border-[#5b9bd5] bg-[#f0f0f0] shadow-[-4px_4px_14px_rgba(0,0,0,.3)] flex flex-col">
        <div className="h-[31px] bg-white flex items-center shrink-0">
          <span className="ml-[8px]"><Glodon s={16} r={4} /></span>
          <span className="ml-[5px] text-[#222]">参数化选择</span>
        </div>
        <div className="h-[462px] flex shrink-0">
          <div className="w-[286px] shrink-0 border-r border-[#a8a8a8] relative pt-[18px] pl-[5px]">
            <span className="absolute left-[1px] right-0 top-[6px] h-px bg-[#d0d0d0]" />
            <span className="absolute left-[8px] top-0 px-[1px] bg-[#f0f0f0] text-[#111] leading-[14px]">图形</span>
            <div className="grid grid-cols-[137px_137px] gap-x-[3px] gap-y-[4px]">
              {cards.map((c) => (
                <div key={c.id} className="h-[144px] bg-[#f8f8f8] border-b border-r border-[#a0a0a0] pt-px pl-px">
                  <div className={"w-[135px] border-2 " + (c.sel ? "border-[#00ffff]" : "border-transparent")}><Thumb {...c} /></div>
                </div>
              ))}
            </div>
          </div>
          <div className="flex-1 ml-[4px] flex flex-col min-w-0">
            <div className="h-[29px] shrink-0 border-b border-[#a8a8a8] flex items-center pl-[171px] text-[#222]">
              <span className="w-[13px] h-[13px] rounded-full border border-[#444] bg-white mr-[1px]" />角度放坡形式
            </div>
            <Cad />
          </div>
        </div>
        <div className="flex-1 border-t-2 border-[#a8a8a8] flex items-start pl-[336px] pt-[8px]">
          <span className="w-[89px] h-[24px] border border-[#adadad] bg-[#e1e1e1] flex items-center justify-center text-[#222]">配筋形式</span>
        </div>
      </div>
    </div>
  );
}
